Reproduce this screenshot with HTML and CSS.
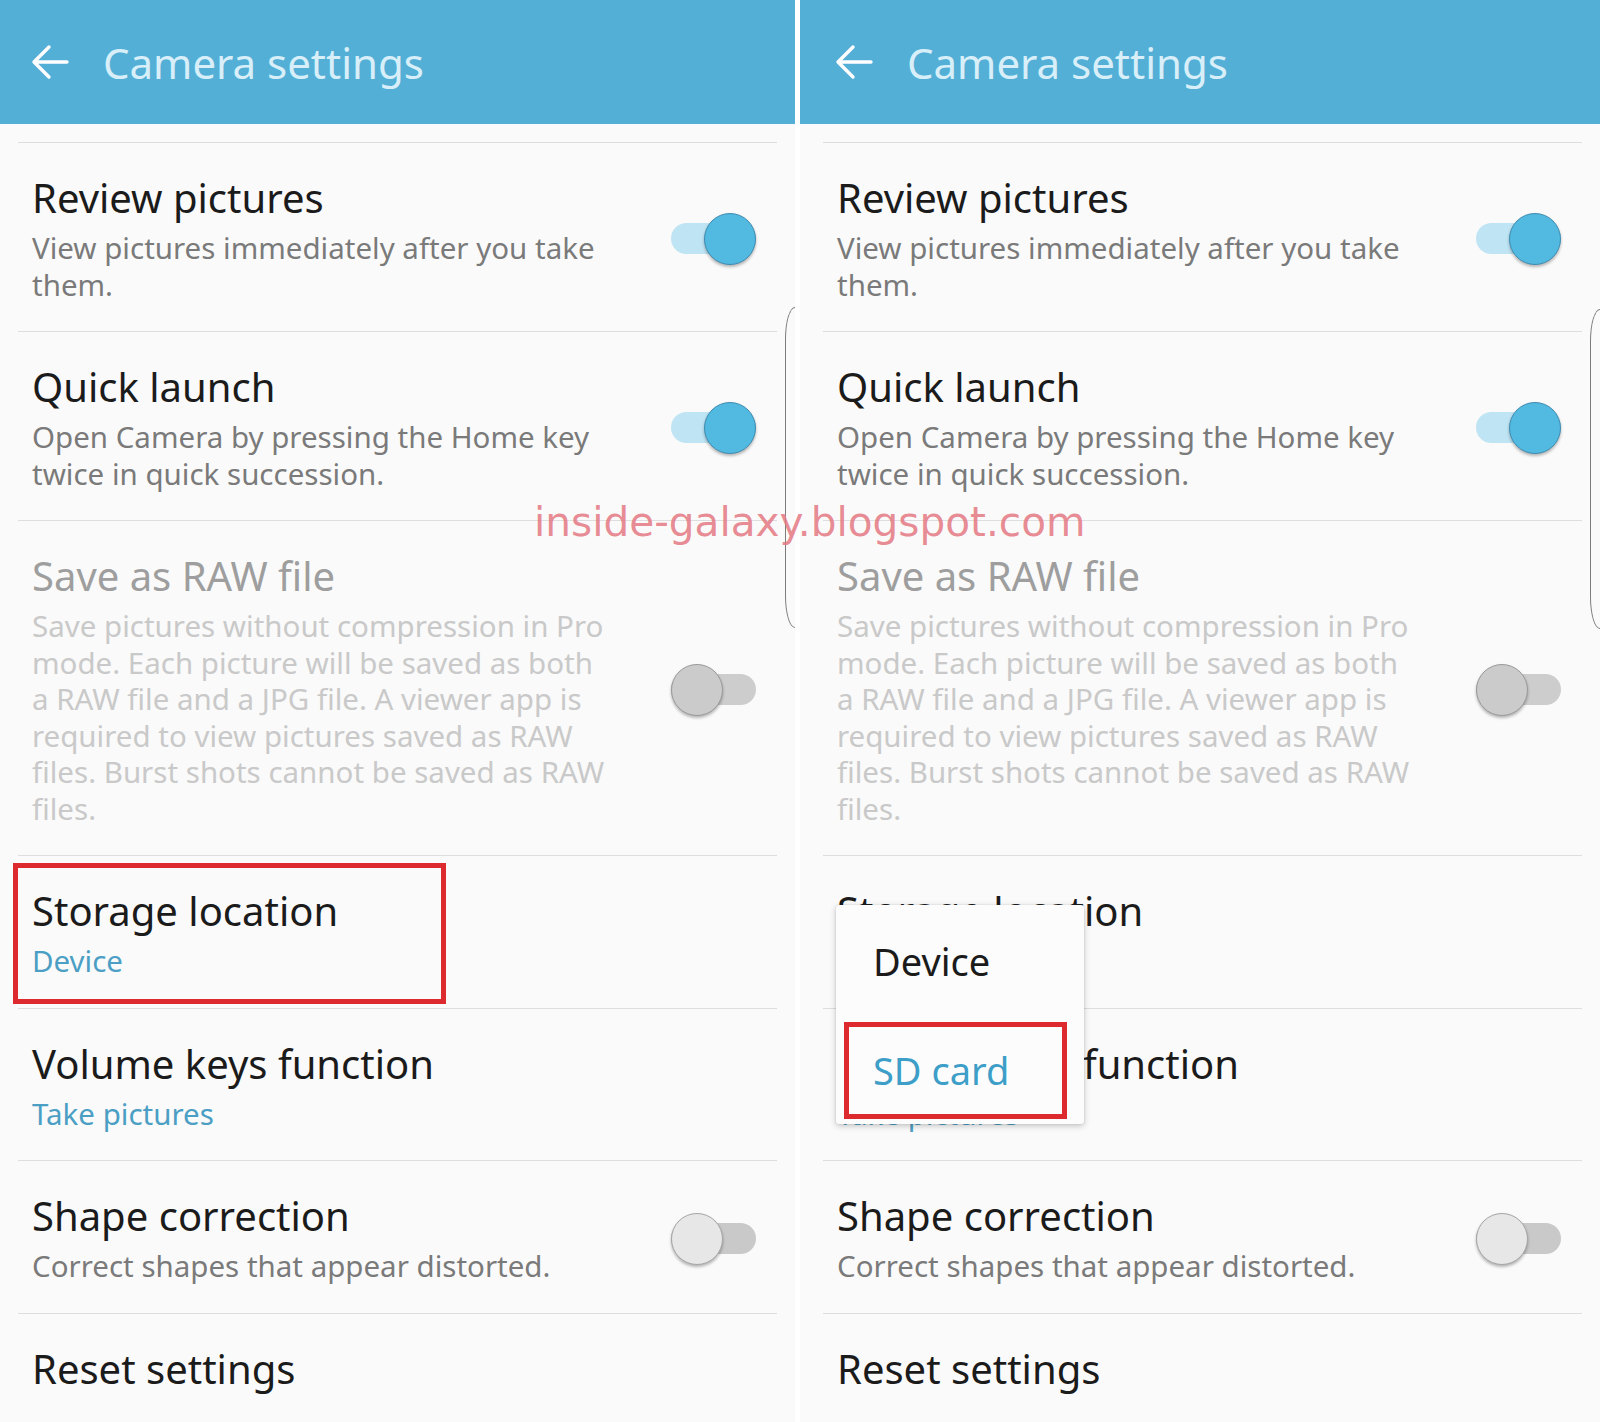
FILE: index.html
```html
<!DOCTYPE html>
<html lang="en">
<head>
<meta charset="utf-8">
<title>Camera settings</title>
<link rel="stylesheet" href="styles.css">
</head>
<body>
<div class="page">
  <section class="panel panel-left">
    <header class="appbar">
      <svg class="back" viewBox="0 0 40 40" width="40" height="40"><path d="M37 20H5 M19 5L4 20L19 35" fill="none" stroke="#fff" stroke-width="3.4" stroke-linecap="round" stroke-linejoin="round"/></svg>
      <h1 class="appbar-title">Camera settings</h1>
    </header>
    <ul class="list">
      <li class="row">
        <div class="text"><div class="title">Review pictures</div><div class="sub">View pictures immediately after you take<br>them.</div></div>
        <span class="switch on"></span>
      </li>
      <li class="row">
        <div class="text"><div class="title">Quick launch</div><div class="sub">Open Camera by pressing the Home key<br>twice in quick succession.</div></div>
        <span class="switch on"></span>
      </li>
      <li class="row disabled">
        <div class="text"><div class="title">Save as RAW file</div><div class="sub">Save pictures without compression in Pro<br>mode. Each picture will be saved as both<br>a RAW file and a JPG file. A viewer app is<br>required to view pictures saved as RAW<br>files. Burst shots cannot be saved as RAW<br>files.</div></div>
        <span class="switch off dim"></span>
      </li>
      <li class="row">
        <div class="text"><div class="title">Storage location</div><div class="sub value">Device</div></div>
      </li>
      <li class="row">
        <div class="text"><div class="title">Volume keys function</div><div class="sub value">Take pictures</div></div>
      </li>
      <li class="row">
        <div class="text"><div class="title">Shape correction</div><div class="sub">Correct shapes that appear distorted.</div></div>
        <span class="switch off"></span>
      </li>
      <li class="row">
        <div class="text"><div class="title">Reset settings</div></div>
      </li>
    </ul>
    <div class="highlight highlight-storage"></div>
    <div class="edge"></div>
  </section>

  <section class="panel panel-right">
    <header class="appbar">
      <svg class="back" viewBox="0 0 40 40" width="40" height="40"><path d="M37 20H5 M19 5L4 20L19 35" fill="none" stroke="#fff" stroke-width="3.4" stroke-linecap="round" stroke-linejoin="round"/></svg>
      <h1 class="appbar-title">Camera settings</h1>
    </header>
    <ul class="list">
      <li class="row">
        <div class="text"><div class="title">Review pictures</div><div class="sub">View pictures immediately after you take<br>them.</div></div>
        <span class="switch on"></span>
      </li>
      <li class="row">
        <div class="text"><div class="title">Quick launch</div><div class="sub">Open Camera by pressing the Home key<br>twice in quick succession.</div></div>
        <span class="switch on"></span>
      </li>
      <li class="row disabled">
        <div class="text"><div class="title">Save as RAW file</div><div class="sub">Save pictures without compression in Pro<br>mode. Each picture will be saved as both<br>a RAW file and a JPG file. A viewer app is<br>required to view pictures saved as RAW<br>files. Burst shots cannot be saved as RAW<br>files.</div></div>
        <span class="switch off dim"></span>
      </li>
      <li class="row">
        <div class="text"><div class="title">Storage location</div><div class="sub value">Device</div></div>
      </li>
      <li class="row">
        <div class="text"><div class="title">Volume keys function</div><div class="sub value">Take pictures</div></div>
      </li>
      <li class="row">
        <div class="text"><div class="title">Shape correction</div><div class="sub">Correct shapes that appear distorted.</div></div>
        <span class="switch off"></span>
      </li>
      <li class="row">
        <div class="text"><div class="title">Reset settings</div></div>
      </li>
    </ul>
    <div class="popup">
      <div class="popup-item">Device</div>
      <div class="popup-item selected">SD card</div>
    </div>
    <div class="edge edge-right"></div>
  </section>

  <div class="watermark">inside-galaxy.blogspot.com</div>
</div>
</body>
</html>
```

FILE: styles.css
```css
* { box-sizing: border-box; }

html, body {
  margin: 0;
  padding: 0;
  background: #ffffff;
}

body {
  width: 1600px;
  height: 1422px;
  overflow: hidden;
  font-family: "Noto Sans", "Open Sans", "DejaVu Sans", sans-serif;
}

.page {
  position: relative;
  display: flex;
  gap: 5px;
  width: 1600px;
  height: 1422px;
}

.panel {
  position: relative;
  background: #fafafa;
  height: 1422px;
  overflow: hidden;
}

.panel-left { width: 795px; }
.panel-right { width: 800px; }

.appbar {
  display: flex;
  align-items: center;
  gap: 33px;
  height: 124px;
  padding-left: 30px;
  background: #54afd6;
}

.panel-right .appbar { padding-left: 34px; }

.back { flex: none; display: block; }

.appbar-title {
  margin: 0;
  font-size: 42px;
  font-weight: 400;
  color: #d8eff9;
  letter-spacing: 0;
}

.list {
  list-style: none;
  margin: 0 18px;
  padding: 18px 0 0;
}

.panel-right .list { margin: 0 18px 0 23px; }

.row {
  display: flex;
  align-items: center;
  justify-content: space-between;
  border-top: 1px solid #dedede;
  padding: 32px 21px 28px 14px;
}

.text { flex: 1; min-width: 0; }

.title {
  font-size: 40px;
  line-height: 46px;
  color: #1b1b1b;
  white-space: nowrap;
}

.sub {
  margin-top: 9px;
  font-size: 29.5px;
  line-height: 36.5px;
  color: #7a7a7a;
  white-space: nowrap;
}

.sub.value { color: #4c9fc4; }

.row.disabled .title { color: #9e9e9e; }
.row.disabled .sub { color: #c9c9c9; }

/* switches */
.switch {
  position: relative;
  flex: none;
  width: 85px;
  height: 50px;
}

.switch::before {
  content: "";
  position: absolute;
  left: 0;
  right: 0;
  top: 9px;
  height: 31px;
  border-radius: 16px;
  background: #c9c9c9;
}

.switch::after {
  content: "";
  position: absolute;
  top: -1px;
  width: 50px;
  height: 50px;
  border-radius: 50%;
  box-shadow: 0 2px 3px rgba(0, 0, 0, 0.28);
}

.switch.on::before { background: #bfe4f3; }
.switch.on::after {
  right: 0;
  background: #52b9e1;
  border: 1.5px solid #3f8db2;
}

.switch.off::after {
  left: 0;
  background: #e7e7e7;
  border: 1.5px solid #a6a6a6;
}

.switch.off.dim::before { background: #cdcdcd; }
.switch.off.dim::after {
  background: #cbcbcb;
  border-color: #9a9a9a;
}

/* annotations */
.highlight {
  position: absolute;
  border: 5px solid #dc2a2f;
}

.highlight-storage {
  left: 13px;
  top: 863px;
  width: 433px;
  height: 141px;
}

/* curved screen edge */
.edge {
  position: absolute;
  left: 785px;
  top: 307px;
  width: 10px;
  height: 321px;
  border: 1.5px solid #7d7d7d;
  border-right: none;
  border-radius: 10px 0 0 10px / 32px 0 0 32px;
}

.edge-right {
  left: 790px;
  top: 309px;
  width: 12px;
  height: 320px;
}

/* popup menu */
.popup {
  position: absolute;
  left: 36px;
  top: 905px;
  width: 248px;
  background: #fcfcfc;
  border-radius: 3px;
  box-shadow: 0 2px 6px rgba(0, 0, 0, 0.22), 0 0 2px rgba(0, 0, 0, 0.12);
  padding-bottom: 5px;
}

.popup-item {
  font-size: 38px;
  line-height: 50px;
  color: #1b1b1b;
  padding: 31px 0 36px 37px;
}

.popup-item.selected {
  margin: 0 17px 0 8px;
  border: 5px solid #dc2a2f;
  padding: 18px 0 19px 24px;
  color: #3d9ec8;
}

/* watermark */
.watermark {
  position: absolute;
  left: 534px;
  top: 499px;
  font-family: "DejaVu Sans", sans-serif;
  font-size: 40.6px;
  line-height: 46px;
  color: rgba(228, 120, 130, 0.85);
  white-space: nowrap;
}
```
